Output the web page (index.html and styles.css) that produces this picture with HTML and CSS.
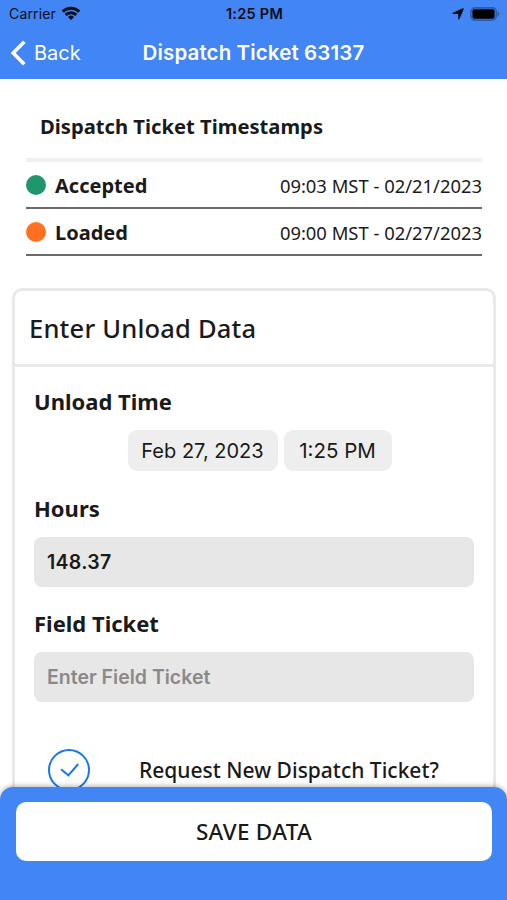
FILE: index.html
```html
<!DOCTYPE html>
<html lang="en">

<head>
    <meta charset="UTF-8">
    <meta name="viewport" content="width=device-width, initial-scale=1.0">
    <title>Dispatch Ticket 63137</title>
    <link rel="stylesheet" href="styles.css">
</head>

<body>
    <header class="header">
        <div class="status">
            <div class="status-left">
                <span class="carrier">Carrier</span>
                <svg class="wifi" viewBox="0 0 20 15" width="20" height="15">
                    <path d="M1.7 5.6a11.8 11.8 0 0 1 16.6 0M4.7 8.9a7.5 7.5 0 0 1 10.6 0" fill="none" stroke="#070d18" stroke-width="2.9"/>
                    <path d="M10 14l-3-3.1a4.3 4.3 0 0 1 6 0z" fill="#070d18"/>
                </svg>
            </div>
            <span class="time">1:25 PM</span>
            <div class="status-right">
                <svg class="location" viewBox="0 0 12 12" width="12" height="12">
                    <path d="M11 .9L6.9 10.8V5.4H1.2z" fill="#070d18" stroke="#070d18" stroke-width="1.4" stroke-linejoin="round"/>
                </svg>
                <svg class="battery" viewBox="0 0 30 14" width="30" height="14">
                    <rect x="0.9" y="0.9" width="25.4" height="12.2" rx="4" fill="none" stroke="#2c5ba9" stroke-width="1.6"/>
                    <rect x="2.4" y="2.3" width="22.2" height="9.4" rx="2" fill="#000"/>
                    <path d="M27.6 4.6c2.2.8 2.2 4 0 4.8z" fill="#2c5ba9"/>
                </svg>
            </div>
        </div>
        <nav class="nav">
            <a href="javascript:;" class="back">
                <svg viewBox="0 0 16 26" width="16" height="26">
                    <path d="M14.3 1.8L3.2 13l11.1 11.2" fill="none" stroke="#fff" stroke-width="3.6"/>
                </svg>
                <span class="back-text">Back</span>
            </a>
            <h1 class="title">Dispatch Ticket 63137</h1>
        </nav>
    </header>

    <main class="content">
        <section class="timestamps">
            <h2 class="timestamps-title">Dispatch Ticket Timestamps</h2>
            <ul class="list">
                <li class="row">
                    <i class="dot green"></i>
                    <span class="state">Accepted</span>
                    <span class="date">09:03 MST - 02/21/2023</span>
                </li>
                <li class="row">
                    <i class="dot orange"></i>
                    <span class="state">Loaded</span>
                    <span class="date">09:00 MST - 02/27/2023</span>
                </li>
            </ul>
        </section>

        <section class="card">
            <h2 class="card-title">Enter Unload Data</h2>
            <form class="form">
                <h3 class="label">Unload Time</h3>
                <div class="pickers">
                    <button type="button" class="picker picker-date"><span>Feb 27, 2023</span></button>
                    <button type="button" class="picker picker-time"><span>1:25 PM</span></button>
                </div>
                <label class="label" for="hours">Hours</label>
                <input class="input input-hours" id="hours" type="text" value="148.37">
                <label class="label" for="field">Field Ticket</label>
                <input class="input" id="field" type="text" placeholder="Enter Field Ticket">
                <div class="request">
                    <svg viewBox="0 0 42 42" width="42" height="42">
                        <circle cx="21" cy="21" r="20" fill="none" stroke="#1479ec" stroke-width="2"/>
                        <path d="M13 20.3l7.4 6L30.2 15" fill="none" stroke="#1479ec" stroke-width="2"/>
                    </svg>
                    <span class="request-text">Request New Dispatch Ticket?</span>
                </div>
            </form>
        </section>
    </main>

    <footer class="footer">
        <button type="button" class="save"><span>SAVE DATA</span></button>
    </footer>
</body>

</html>
```
FILE: styles.css
```css
* {
    margin: 0;
    padding: 0;
    box-sizing: border-box;
}

html,
body {
    height: 100%;
}

body {
    overflow: hidden;
    display: flex;
    flex-direction: column;
    background-color: #fff;
    color: #1a1a1a;
    font-family: "Noto Sans", sans-serif;
}

ul {
    list-style: none;
}

a {
    text-decoration: none;
    color: #fff;
}

button,
input {
    border: 0;
    color: inherit;
    font-family: "Inter", sans-serif;
}

svg {
    display: block;
    flex: none;
}

span,
h1,
h2 {
    white-space: nowrap;
}

/* 顶部 */
.header {
    flex: none;
    height: 79px;
    background-color: #4285f4;
    font-family: "Inter", sans-serif;
}

.status {
    display: grid;
    grid-template-columns: 1fr auto 1fr;
    align-items: center;
    height: 27px;
    padding: 0 7px 0 9px;
    color: #070d18;
    font-size: 14px;
}

.status-left,
.status-right {
    display: flex;
    align-items: center;
}

.status-left {
    gap: 5px;
}

.carrier {
    letter-spacing: .15px;
}

.status-right {
    justify-content: flex-end;
    gap: 6px;
}

.time {
    font-size: 14.5px;
    font-weight: 600;
    letter-spacing: .25px;
}

.nav {
    display: grid;
    grid-template-columns: 1fr auto 1fr;
    align-items: center;
    height: 51px;
    padding: 0 10px;
    color: #fff;
}

.back {
    display: flex;
    align-items: center;
    gap: 8px;
    font-size: 20px;
}

.title {
    font-size: 20.5px;
    font-weight: 600;
    letter-spacing: .13px;
}

/* 时间记录 */
.content {
    flex: 1;
    overflow: hidden;
}

.timestamps {
    padding: 0 25px 0 26px;
}

.timestamps-title {
    height: 79px;
    padding-left: 14px;
    font-size: 20.2px;
    line-height: 94px;
}

.list {
    border-top: 4px solid #f0f0f0;
}

.row {
    display: flex;
    align-items: center;
    height: 47px;
    border-bottom: 2px solid #6a6a6a;
}

.dot {
    width: 20px;
    height: 20px;
    margin-right: 9px;
    border-radius: 50%;
}

.green {
    background-color: #21966c;
}

.orange {
    background-color: #ff7020;
}

.state {
    padding-top: 2px;
    font-size: 20px;
    font-weight: 700;
}

.date {
    margin-left: auto;
    padding-top: 1px;
    font-size: 18.4px;
}

/* 卡片 */
.card {
    height: 560px;
    margin: 32px 11px 0 12px;
    border: 3px solid #e9e9e9;
    border-radius: 10px;
}

.card-title {
    height: 76px;
    padding-left: 14px;
    border-bottom: 3px solid #e9e9e9;
    font-size: 25.5px;
    font-weight: 500;
    line-height: 74px;
    letter-spacing: .2px;
}

.form {
    display: flex;
    flex-direction: column;
    padding: 19px 19px 0;
}

.label {
    height: 30px;
    font-size: 22px;
    font-weight: 700;
    line-height: 30px;
}

.pickers {
    display: flex;
    justify-content: center;
    gap: 6px;
    margin: 14px 0 22px;
    padding-left: 11px;
}

.picker {
    height: 41px;
    border-radius: 9px;
    background-color: #eee;
    font-size: 20px;
}

.picker-date {
    width: 150px;
}

.picker-time {
    width: 108px;
    font-size: 20.5px;
}

.input {
    width: 440px;
    height: 50px;
    margin: 14px 0 21px;
    padding: 0 13px;
    border-radius: 8px;
    background-color: #e7e7e7;
    font-size: 19.5px;
    font-weight: 600;
}

.input-hours {
    letter-spacing: .3px;
}

.input::placeholder {
    color: #8a8a8a;
}

.request {
    display: flex;
    align-items: center;
    gap: 49px;
    margin-top: 26px;
    padding-left: 14px;
}

.request-text {
    font-size: 21px;
    font-weight: 500;
}

/* 底部按钮 */
.footer {
    position: fixed;
    left: 0;
    right: 0;
    bottom: 0;
    height: 113px;
    padding: 15px 15px 0 16px;
    border-radius: 13px 13px 0 0;
    background-color: #4285f4;
    box-shadow: 0 -1px 5px rgba(0, 0, 0, .3);
}

.save {
    width: 100%;
    height: 59px;
    border-radius: 10px;
    background-color: #fff;
    font-family: "Noto Sans", sans-serif;
    font-size: 22.5px;
    font-weight: 500;
    letter-spacing: .3px;
}
```
